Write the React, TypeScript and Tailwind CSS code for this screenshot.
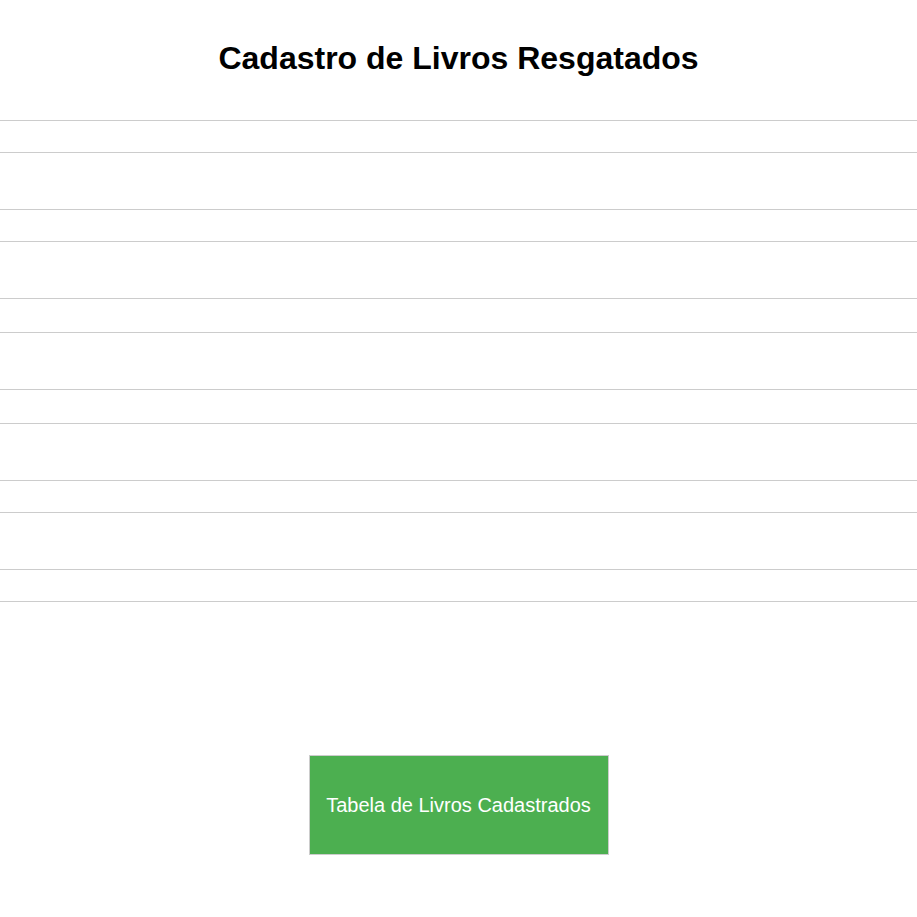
export default function App() {
  const rows = [33, 33, 35, 35, 33, 33]

  return (
    <div className="min-h-screen bg-white font-['Liberation_Sans',Arial,sans-serif] text-black">
      {/* Header */}
      <div className="h-[120px] pt-[42px]">
        <h1 className="text-center text-[32px] font-bold leading-[32px]">Cadastro de Livros Resgatados</h1>
      </div>

      {/* Form fields */}
      <div className="flex flex-col gap-[56px]">
        {rows.map((h, i) => (
          <div
            key={i}
            className={`w-full border-y border-[#cccccc] ${h === 35 ? 'h-[35px]' : 'h-[33px]'}`}
          />
        ))}
      </div>

      {/* Action */}
      <div className="flex justify-center pt-[153px]">
        <button className="flex h-[100px] w-[300px] items-center justify-center border border-[#cccccc] bg-[#4caf50] text-[20px] text-white">
          Tabela de Livros Cadastrados
        </button>
      </div>
    </div>
  )
}
